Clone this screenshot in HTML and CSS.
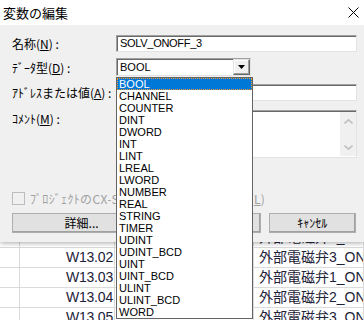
FILE: index.html
```html
<html>
	<head>
		<link rel="stylesheet" href="styles.css">
	</head>
	<body>
		<div class="dialog">
			<div class="titlebar">
				<span class="title">変数の編集</span>
				<svg class="close" width="11" height="11" viewBox="0 0 11 11">
					<path d="M0.5 0.5 L10.5 10.5 M10.5 0.5 L0.5 10.5" stroke="#000" stroke-width="1" fill="none"/>
				</svg>
			</div>
			<div class="form">
				<div class="row">
					<span class="lbl">名称(<u>N</u>) :</span>
					<div class="field">SOLV_ONOFF_3</div>
				</div>
				<div class="row type">
					<span class="lbl">ﾃﾞｰﾀ型(<u>D</u>) :</span>
					<div class="select">
						<span class="value">BOOL</span>
						<div class="drop-btn"><svg width="7" height="4" viewBox="0 0 7 4"><path d="M0 0 H7 L3.5 4 Z" fill="#000"/></svg></div>
						<ul class="list">
							<li class="selected">BOOL</li>
							<li>CHANNEL</li>
							<li>COUNTER</li>
							<li>DINT</li>
							<li>DWORD</li>
							<li>INT</li>
							<li>LINT</li>
							<li>LREAL</li>
							<li>LWORD</li>
							<li>NUMBER</li>
							<li>REAL</li>
							<li>STRING</li>
							<li>TIMER</li>
							<li>UDINT</li>
							<li>UDINT_BCD</li>
							<li>UINT</li>
							<li>UINT_BCD</li>
							<li>ULINT</li>
							<li>ULINT_BCD</li>
							<li>WORD</li>
						</ul>
					</div>
				</div>
				<div class="row addr">
					<span class="lbl">ｱﾄﾞﾚｽまたは値(<u>A</u>) :</span>
					<div class="field"></div>
				</div>
				<div class="row memo">
					<span class="lbl">ｺﾒﾝﾄ(<u>M</u>) :</span>
					<div class="field area">
						<div class="scrollbar">
							<svg width="9" height="5" viewBox="0 0 9 5"><path d="M0.5 4.5 L4.5 0.8 L8.5 4.5" stroke="#c2c2c2" stroke-width="1.6" fill="none"/></svg>
							<svg width="9" height="5" viewBox="0 0 9 5"><path d="M0.5 0.5 L4.5 4.2 L8.5 0.5" stroke="#c2c2c2" stroke-width="1.6" fill="none"/></svg>
						</div>
					</div>
				</div>
			</div>
			<div class="check-row">
				<span class="box"></span>
				<span class="check-text">ﾌﾟﾛｼﾞｪｸﾄのCX-Serverﾌｧｲﾙの変数を登録(<u>L</u>)</span>
			</div>
			<div class="buttons">
				<div class="btn wide">詳細...</div>
				<div class="btn ok">OK</div>
				<div class="btn">ｷｬﾝｾﾙ</div>
			</div>
		</div>
		<div class="sheet">
			<div class="sheet-row"><span></span><span class="addr-cell">W13.01</span><span></span><span class="name-cell">外部電磁弁2_ONOFF</span></div>
			<div class="sheet-row"><span></span><span class="addr-cell">W13.02</span><span></span><span class="name-cell">外部電磁弁3_ONOFF</span></div>
			<div class="sheet-row"><span></span><span class="addr-cell">W13.03</span><span></span><span class="name-cell">外部電磁弁1_ONOFF</span></div>
			<div class="sheet-row"><span></span><span class="addr-cell">W13.04</span><span></span><span class="name-cell">外部電磁弁2_ONOFF</span></div>
			<div class="sheet-row"><span></span><span class="addr-cell">W13.05</span><span></span><span class="name-cell">外部電磁弁3_ONOFF</span></div>
		</div>
	</body>
</html>
```

FILE: styles.css
```css
html body {
	margin: 0;
	width: 364px;
	height: 320px;
	overflow: hidden;
	background-color: #fff;
	font-family: "Noto Sans CJK JP", "Liberation Sans", sans-serif;
	color: #000;
}

.dialog {
	position: relative;
	z-index: 2;
	height: 242px;
	background-color: #f0f0f0;
	box-shadow: 0 1px 5px rgba(0, 0, 0, 0.35);
}

.titlebar {
	height: 25px;
	background-color: #fff;
	display: flex;
	align-items: center;
	justify-content: space-between;
	padding: 0 5px 0 3px;
}

.title {
	font-size: 13px;
	line-height: 25px;
}

.form {
	display: flex;
	flex-direction: column;
	padding: 10px 7px 0 12px;
}

.row {
	display: flex;
	align-items: center;
}

.row.type {
	margin-top: 6px;
}

.row.addr {
	margin-top: 8px;
}

.row.memo {
	margin-top: 9px;
	align-items: flex-start;
}

.lbl {
	width: 104px;
	flex: none;
	font-size: 12px;
	line-height: 17px;
	white-space: nowrap;
}

.field {
	box-sizing: border-box;
	width: 241px;
	height: 17px;
	background-color: #fff;
	border: 1px solid;
	border-color: #a0a0a0 #e3e3e3 #e3e3e3 #a0a0a0;
	box-shadow: inset 1px 1px 0 #696969;
	font-family: "Liberation Sans", sans-serif;
	font-size: 11px;
	letter-spacing: -0.3px;
	line-height: 14px;
	padding-left: 3px;
}

.field.area {
	height: 48px;
	display: flex;
	justify-content: flex-end;
	padding: 1px 0 1px 0;
}

.scrollbar {
	width: 16px;
	background-color: #f0f0f0;
	display: flex;
	flex-direction: column;
	justify-content: space-between;
	align-items: center;
	padding: 7px 0 6px;
}

.select {
	position: relative;
	box-sizing: border-box;
	width: 135px;
	height: 18px;
	background-color: #fff;
	border: 1px solid;
	border-color: #a0a0a0 #e3e3e3 #e3e3e3 #a0a0a0;
	box-shadow: inset 1px 1px 0 #696969;
	display: flex;
	align-items: center;
	justify-content: space-between;
	font-family: "Liberation Sans", sans-serif;
	font-size: 11px;
}

.value {
	padding-left: 3px;
}

.drop-btn {
	box-sizing: border-box;
	width: 17px;
	height: 16px;
	background-color: #f0f0f0;
	border: 1px solid;
	border-color: #e3e3e3 #696969 #696969 #e3e3e3;
	box-shadow: inset -1px -1px 0 #a0a0a0, inset 1px 1px 0 #fff;
	display: flex;
	align-items: center;
	justify-content: center;
}

.list {
	position: absolute;
	top: 18px;
	left: -1px;
	box-sizing: border-box;
	width: 137px;
	margin: 0;
	padding: 0;
	list-style: none;
	background-color: #fff;
	border: 1px solid #646464;
	font-family: "Liberation Sans", sans-serif;
	font-size: 11px;
	line-height: 12px;
}

.list li {
	height: 12px;
	padding-left: 2px;
	white-space: nowrap;
}

.list li.selected {
	background-color: #0078d7;
	color: #fff;
	outline: 1px dotted #f39a2c;
	outline-offset: -1px;
}

.check-row {
	display: flex;
	align-items: center;
	margin-top: 34px;
	padding-left: 12px;
	height: 13px;
}

.box {
	box-sizing: border-box;
	width: 13px;
	height: 13px;
	border: 1px solid #bcbcbc;
	background-color: #f0f0f0;
}

.check-text {
	margin-left: 5px;
	font-size: 12px;
	letter-spacing: 0.35px;
	color: #a0a0a0;
	white-space: nowrap;
}

.buttons {
	display: flex;
	margin-top: 8px;
	padding-left: 12px;
}

.btn {
	box-sizing: border-box;
	width: 88px;
	height: 20px;
	background-color: #e1e1e1;
	border: 1px solid #adadad;
	box-shadow: inset -1px -1px 0 #a0a0a0;
	font-size: 12px;
	line-height: 18px;
	text-align: center;
	margin-right: 8px;
}

.btn.wide {
	width: 138px;
	margin-right: 24px;
	padding-left: 2px;
}

.sheet {
	position: relative;
	z-index: 1;
	margin-top: -14px;
}

.sheet-row {
	display: grid;
	grid-template-columns: 20px 95px 139px 1fr;
	box-sizing: border-box;
	height: 20px;
	border-bottom: 1px solid #dadada;
	font-family: "Liberation Sans", "Noto Sans CJK JP", sans-serif;
	font-size: 14px;
	line-height: 19px;
	color: #1d2238;
}

.sheet-row span {
	border-right: 1px solid #dadada;
	white-space: nowrap;
	overflow: hidden;
}

.addr-cell {
	text-align: right;
	padding-right: 1px;
	letter-spacing: -0.2px;
}

.name-cell {
	padding-left: 5px;
}
```
